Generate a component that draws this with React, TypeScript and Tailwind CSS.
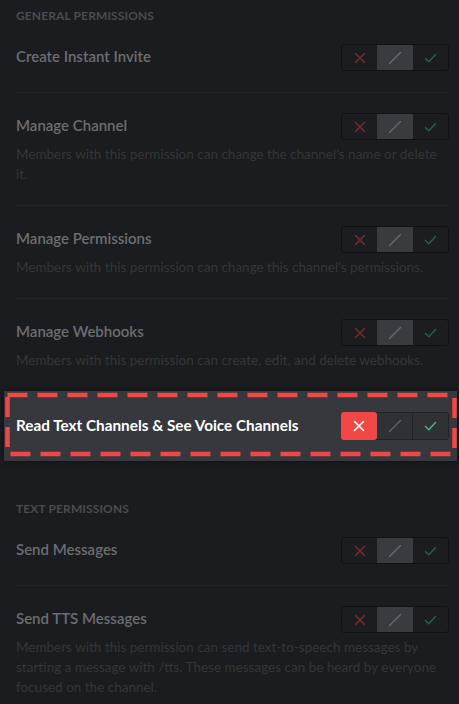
import React from "react";

type Perm = { title: string; desc?: string };

const general: Perm[] = [
  { title: "Create Instant Invite" },
  {
    title: "Manage Channel",
    desc: "Members with this permission can change the channel's name or delete it.",
  },
  {
    title: "Manage Permissions",
    desc: "Members with this permission can change this channel's permissions.",
  },
  {
    title: "Manage Webhooks",
    desc: "Members with this permission can create, edit, and delete webhooks.",
  },
];

const text: Perm[] = [
  { title: "Send Messages" },
  {
    title: "Send TTS Messages",
    desc: "Members with this permission can send text-to-speech messages by starting a message with /tts. These messages can be heard by everyone focused on the channel.",
  },
];

function XIcon({ color }: { color: string }) {
  return (
    <svg width="12" height="12" viewBox="0 0 12 12">
      <path d="M1.5 1.5L10.5 10.5M10.5 1.5L1.5 10.5" stroke={color} strokeWidth="1.6" strokeLinecap="round" />
    </svg>
  );
}

function SlashIcon({ color }: { color: string }) {
  return (
    <svg width="14" height="14" viewBox="0 0 14 14">
      <path d="M1.5 12.5L12.5 1.5" stroke={color} strokeWidth="1.4" strokeLinecap="round" />
    </svg>
  );
}

function CheckIcon({ color }: { color: string }) {
  return (
    <svg width="13" height="12" viewBox="0 0 13 12">
      <path d="M1.5 6.5L4.8 9.8L11.5 2.5" stroke={color} strokeWidth="1.5" fill="none" strokeLinecap="round" strokeLinejoin="round" />
    </svg>
  );
}

// dimmed tri-state toggle (neutral selected)
function Toggle() {
  return (
    <div className="flex h-[27px] w-[108px] shrink-0 rounded-[3px] border border-[#111214] bg-[#1c1d20]">
      <div className="flex flex-1 items-center justify-center">
        <XIcon color="#742a2c" />
      </div>
      <div className="flex flex-1 items-center justify-center bg-[#393b40]">
        <SlashIcon color="#66686d" />
      </div>
      <div className="flex flex-1 items-center justify-center">
        <CheckIcon color="#2c5e45" />
      </div>
    </div>
  );
}

// bright toggle with deny selected
function ActiveToggle() {
  return (
    <div className="relative flex h-[28px] w-[108px] shrink-0 rounded-[3px] border border-[#202225] bg-[#2f3136]">
      <div className="-my-px -ml-px flex w-[36px] items-center justify-center rounded-[3px] bg-[#f04747]">
        <XIcon color="#ffffff" />
      </div>
      <div className="flex flex-1 items-center justify-center border-r border-[#202225]">
        <SlashIcon color="#5c5f66" />
      </div>
      <div className="flex flex-1 items-center justify-center">
        <CheckIcon color="#43b581" />
      </div>
    </div>
  );
}

function Row({ p, divider }: { p: Perm; divider: boolean }) {
  return (
    <div className={`pt-[20px] pb-[21px] ${divider ? "border-b border-[#242528]" : ""}`}>
      <div className="flex items-center justify-between">
        <div className="mb-[3px] text-[15px] font-semibold leading-[20px] text-[#6c6e72]">{p.title}</div>
        <Toggle />
      </div>
      {p.desc && (
        <div className="mt-[4px] pr-[8px] text-[13.5px] leading-[20px] text-[#343639]">{p.desc}</div>
      )}
    </div>
  );
}

function Header({ label }: { label: string }) {
  return (
    <div className="text-[12px] font-bold uppercase leading-[16px] tracking-[0.01em] text-[#4a4c50]">
      {label}
    </div>
  );
}

export default function App() {
  return (
    <div
      className="h-[704px] w-[459px] overflow-hidden bg-[#1b1c1f]"
      style={{ fontFamily: "Lato, 'Open Sans', sans-serif" }}
    >
      <div className="pl-4 pr-[10px] pt-[8px]">
        <Header label="General Permissions" />
        <div>
          {general.map((p, i) => (
            <Row key={p.title} p={p} divider={i < general.length - 1} />
          ))}
        </div>
      </div>

      {/* highlighted row with dashed annotation */}
      <div className="relative ml-1 mr-[2px] bg-[#36383d] py-[21px] pl-3 pr-[8px] shadow-[0_0_6px_rgba(0,0,0,0.5)]">
        <div className="flex items-center justify-between">
          <div className="mb-[3px] text-[15.3px] font-bold leading-[20px] text-white">
            Read Text Channels &amp; See Voice Channels
          </div>
          <ActiveToggle />
        </div>
        <svg className="pointer-events-none absolute left-[-4px] top-0 h-[70px] w-[459px]" viewBox="0 0 459 70">
          <rect x="7.5" y="4" width="447" height="59" fill="none" stroke="#f04747" strokeWidth="4.5" strokeDasharray="20 10" />
        </svg>
      </div>

      <div className="pl-4 pr-[10px] pt-[40px]">
        <Header label="Text Permissions" />
        <div>
          {text.map((p, i) => (
            <Row key={p.title} p={p} divider={i < text.length - 1} />
          ))}
        </div>
      </div>
    </div>
  );
}
